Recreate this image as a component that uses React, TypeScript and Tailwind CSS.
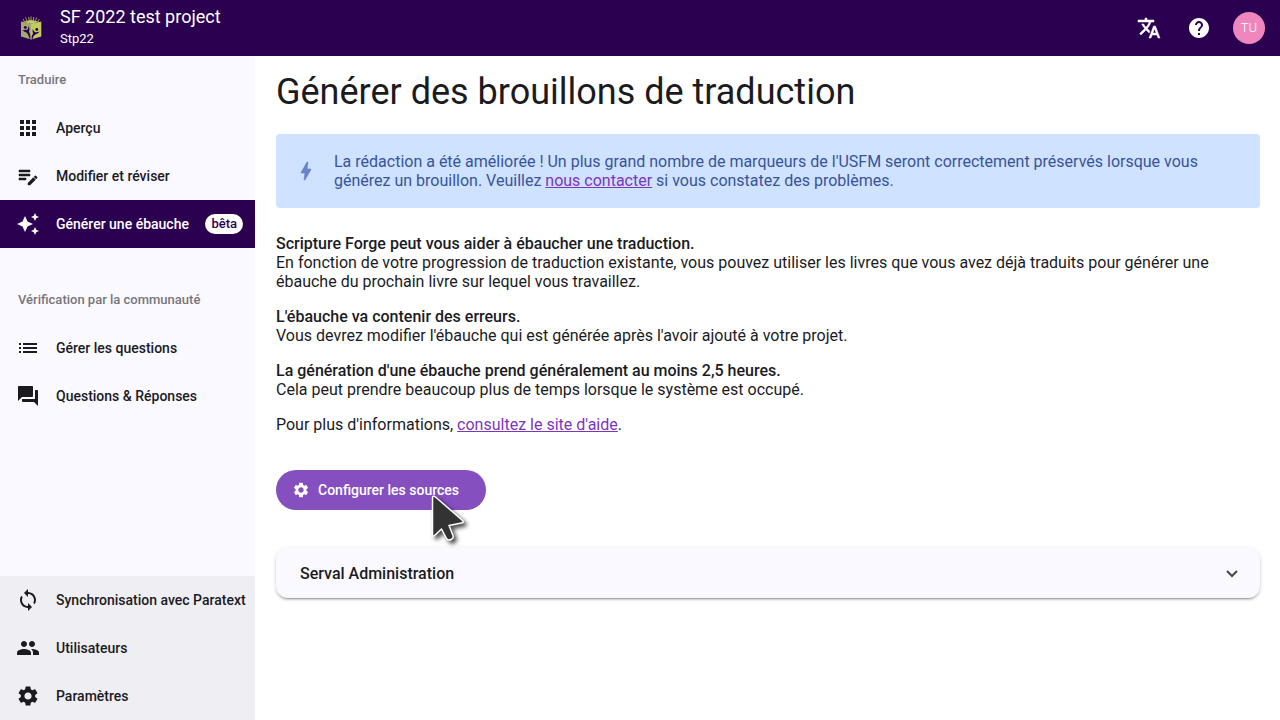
import type { ReactNode } from "react";
import type { IconType } from "react-icons";
import {
  MdApps,
  MdAutoAwesome,
  MdBolt,
  MdEditNote,
  MdForum,
  MdHelp,
  MdList,
  MdPeople,
  MdSettings,
  MdSync,
  MdTranslate,
} from "react-icons/md";

type NavItemProps = { icon: IconType; label: string; active?: boolean; badge?: string; heavyIcon?: boolean };

function NavItem({ icon: Icon, label, active = false, badge, heavyIcon = false }: NavItemProps) {
  return (
    <li>
      <a
        href="#"
        aria-current={active ? "page" : undefined}
        className={
          active
            ? "flex h-12 items-center bg-[#2b0050] pr-3 pl-4 text-white"
            : "flex h-12 items-center pl-4 text-[#1b1b1f]"
        }
      >
        <Icon
          className={heavyIcon ? "size-6 shrink-0 [&>path:last-child]:stroke-[0.5]" : "size-6 shrink-0"}
          aria-hidden="true"
        />
        <span className="ml-4 text-sm font-medium whitespace-nowrap">{label}</span>
        {badge && (
          <span className="ml-auto rounded-full bg-white px-1.5 text-[13px] leading-5 font-medium text-[#2b0050]">
            {badge}
          </span>
        )}
      </a>
    </li>
  );
}

function NavHeading({ children }: { children: ReactNode }) {
  return <h2 className="flex h-12 items-center px-[18px] text-[13px] font-medium text-[#77767a]">{children}</h2>;
}

function Logo() {
  return (
    <svg viewBox="0 0 22 24" className="h-6 w-[22px]" aria-hidden="true">
      <path d="M1 5.500l10 2V23.500L1 20.500z" fill="#a6a96f" />
      <path d="M21.300 5.500L11 7.500v16l10.300-3z" fill="#c0cc60" />
      <path
        d="M4.500 5.500L3 3M7 5L5.500 1.500M9.200 5L8.700 1M11 5V.5M13 5l.8-4M15.200 5l1.500-3.500M17.700 5.500L19.300 3"
        stroke="#c0cc60"
        strokeWidth="0.8"
        fill="none"
      />
      <path d="M3 5.700l8-1.700 8.300 1.700L11 7.700z" fill="#c0cc60" />
      <path
        d="M2.500 14.500Q5 13.500 7 14Q8.700 12 8.900 9.500Q9.800 12.500 9 15.500Q10.600 18.500 10.400 23L9.500 22.500Q9 19 6.500 16.500Q4.500 16 2.500 14.500z"
        fill="#2b0050"
      />
      <path
        d="M11.600 23Q11.300 19.500 13 17.800Q12 15.500 12.800 13Q13.700 15.500 15 16.200Q17.500 16.500 19.500 15.500Q18.500 17.600 15.800 18.200Q13.200 19.500 12.600 22.700z"
        fill="#2b0050"
      />
      <circle cx="5.300" cy="11.500" r="1.400" fill="#2b0050" />
      <circle cx="16.800" cy="13.500" r="1.400" fill="#2b0050" />
    </svg>
  );
}

function Pointer() {
  return (
    <svg
      viewBox="0 0 40 52"
      className="pointer-events-none absolute top-6 left-[154px] z-10 h-[52px] w-10 drop-shadow-[3px_3px_2px_rgba(0,0,0,0.7)]"
      aria-hidden="true"
    >
      <path
        d="M2.500 4v36.500q0 2.500 2 1l7-6.500 5 9.500q1.500 2.500 4.500 1 3-1.500 2-4L19 31.500l12.500-2.500q3-.5 1-2.500L5.500 3Q2.500 1 2.500 4z"
        fill="#333"
        stroke="#fff"
        strokeWidth="1.500"
        strokeLinejoin="round"
      />
    </svg>
  );
}

export default function App() {
  return (
    <div className="flex min-h-screen flex-col bg-white font-['Roboto',sans-serif] text-[#1b1b1f]">
      <header className="flex h-14 items-center bg-[#2b0050] pr-[15px] pl-5 text-white">
        <Logo />
        <div className="ml-[18px] flex flex-col pb-0.5">
          <span className="text-lg leading-6">SF 2022 test project</span>
          <span className="text-[13px] leading-5">Stp22</span>
        </div>
        <div className="ml-auto flex items-center">
          <button type="button" aria-label="Langue" className="mr-0.5 flex size-12 items-center justify-center">
            <MdTranslate className="size-6 [&>path:last-child]:stroke-[0.5]" />
          </button>
          <button type="button" aria-label="Aide" className="flex size-12 items-center justify-center">
            <MdHelp className="size-6" />
          </button>
          <button
            type="button"
            className="ml-2.5 flex size-8 items-center justify-center rounded-full bg-[#ed87be] text-[13px] font-light text-white"
          >
            TU
          </button>
        </div>
      </header>
      <div className="flex flex-1">
        <nav className="flex w-[255px] shrink-0 flex-col bg-[#faf9ff]">
          <NavHeading>Traduire</NavHeading>
          <ul>
            <NavItem icon={MdApps} label="Aperçu" />
            <NavItem icon={MdEditNote} label="Modifier et réviser" heavyIcon />
            <NavItem icon={MdAutoAwesome} label="Générer une ébauche" active badge="bêta" />
          </ul>
          <div className="mt-7">
            <NavHeading>Vérification par la communauté</NavHeading>
          </div>
          <ul>
            <NavItem icon={MdList} label="Gérer les questions" />
            <NavItem icon={MdForum} label="Questions & Réponses" />
          </ul>
          <ul className="mt-auto bg-[#efeef3]">
            <NavItem icon={MdSync} label="Synchronisation avec Paratext" />
            <NavItem icon={MdPeople} label="Utilisateurs" />
            <NavItem icon={MdSettings} label="Paramètres" />
          </ul>
        </nav>
        <main className="min-w-0 flex-1 px-5 pt-3.5 pl-[21px]">
          <h1 className="text-4xl leading-[44px]">Générer des brouillons de traduction</h1>
          <div className="mt-5 flex items-center gap-4 rounded bg-[#cfe2ff] p-[18px] text-base leading-[19px] text-[#385499]">
            <MdBolt className="size-6 shrink-0 text-[#6684c8] [&>path:last-child]:stroke-[0.6]" aria-hidden="true" />
            <p>
              La rédaction a été améliorée ! Un plus grand nombre de marqueurs de l'USFM seront correctement préservés
              lorsque vous générez un brouillon. Veuillez{" "}
              <a href="#" className="text-[#7d35bd] underline">
                nous contacter
              </a>{" "}
              si vous constatez des problèmes.
            </p>
          </div>
          <div className="mt-[26px] flex flex-col gap-4 text-base leading-[19px]">
            <p>
              <strong className="block font-medium">Scripture Forge peut vous aider à ébaucher une traduction.</strong>
              En fonction de votre progression de traduction existante, vous pouvez utiliser les livres que vous avez
              déjà traduits pour générer une ébauche du prochain livre sur lequel vous travaillez.
            </p>
            <p>
              <strong className="block font-medium">L'ébauche va contenir des erreurs.</strong>
              Vous devrez modifier l'ébauche qui est générée après l'avoir ajouté à votre projet.
            </p>
            <p>
              <strong className="block font-medium">
                La génération d'une ébauche prend généralement au moins 2,5 heures.
              </strong>
              Cela peut prendre beaucoup plus de temps lorsque le système est occupé.
            </p>
            <p>
              Pour plus d'informations,{" "}
              <a href="#" className="text-[#7d35bd] underline">
                consultez le site d'aide
              </a>
              .
            </p>
          </div>
          <div className="relative mt-9 w-fit">
            <button
              type="button"
              className="flex h-10 min-w-[210px] items-center gap-2 rounded-full bg-[#854fbf] pr-6 pl-4 text-sm font-medium text-white"
            >
              <MdSettings className="size-[18px]" aria-hidden="true" />
              Configurer les sources
            </button>
            <Pointer />
          </div>
          <button
            type="button"
            aria-expanded="false"
            className="mt-[38px] flex h-[50px] w-full items-center justify-between rounded-xl bg-[#faf9ff] pt-0.5 pr-[22px] pl-6 text-base font-medium shadow-[0_3px_1px_-2px_rgba(0,0,0,0.2),0_2px_2px_0_rgba(0,0,0,0.14),0_1px_5px_0_rgba(0,0,0,0.12)]"
          >
            Serval Administration
            <svg viewBox="0 0 12 8" className="h-2 w-3" aria-hidden="true">
              <path d="M1 1l5 5 5-5" fill="none" stroke="#46464f" strokeWidth="2" />
            </svg>
          </button>
        </main>
      </div>
    </div>
  );
}
